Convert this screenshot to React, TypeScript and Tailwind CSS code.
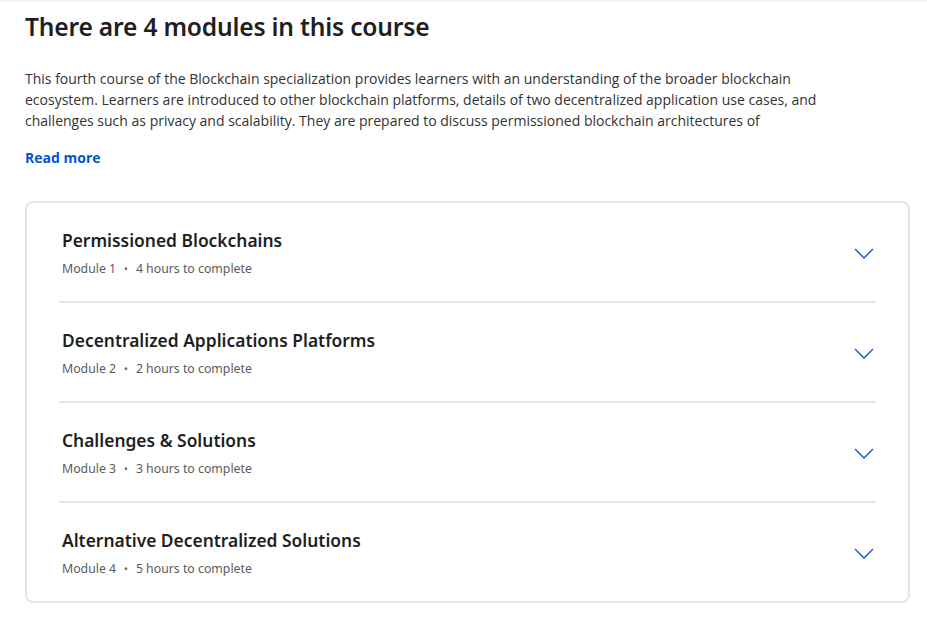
const modules = [
  { title: "Permissioned Blockchains", num: 1, hours: 4 },
  { title: "Decentralized Applications Platforms", num: 2, hours: 2 },
  { title: "Challenges & Solutions", num: 3, hours: 3 },
  { title: "Alternative Decentralized Solutions", num: 4, hours: 5 },
];

function Chevron() {
  return (
    <svg width="20" height="12" viewBox="0 0 20 12" fill="none" className="mt-[2px] text-[#0056d2]">
      <path d="M1 1l9 9 9-9" stroke="currentColor" strokeWidth="1.3" />
    </svg>
  );
}

export default function App() {
  return (
    <div className="min-h-screen bg-white font-['Open_Sans',sans-serif] text-[#1f1f1f]">
      <div className="h-[3px] bg-gradient-to-b from-[#f0f0f0] to-white" />
      <div className="pl-[25px] pr-[17px]">
        <h2 className="mt-[8px] font-['Noto_Sans',sans-serif] text-[24.6px] font-semibold leading-[32px] tracking-[-0.2px]">
          There are 4 modules in this course
        </h2>
        <p className="mt-[25px] max-w-[800px] text-[14px] leading-[21px] text-[#333]">
          This fourth course of the Blockchain specialization provides learners with an understanding of the broader blockchain
          ecosystem. Learners are introduced to other blockchain platforms, details of two decentralized application use cases, and
          challenges such as privacy and scalability. They are prepared to discuss permissioned blockchain architectures of
        </p>
        <button className="mt-[16px] text-[14px] font-bold text-[#0056d2]">Read more</button>
        <div className="mt-[32px] rounded-[8px] border-2 border-[#e5e5e5] px-[32px]">
          {modules.map((m, i) => (
            <div
              key={m.num}
              className={`flex items-center justify-between pt-[25px] pb-[23px] pl-[3px] pr-[2px] ${
                i < modules.length - 1 ? "border-b-2 border-[#e5e5e5]" : ""
              }`}
            >
              <div>
                <div className="font-['Noto_Sans',sans-serif] text-[17.4px] font-semibold leading-[24px] text-[#1f1f1f]">
                  {m.title}
                </div>
                <div className="mt-[8px] flex items-center font-['Noto_Sans',sans-serif] text-[12.3px] leading-[18px] text-[#5b5b5b]">
                  <span>Module {m.num}</span>
                  <span className="mx-[8px] text-[10px]">•</span>
                  <span>{m.hours} hours to complete</span>
                </div>
              </div>
              <Chevron />
            </div>
          ))}
        </div>
      </div>
    </div>
  );
}
